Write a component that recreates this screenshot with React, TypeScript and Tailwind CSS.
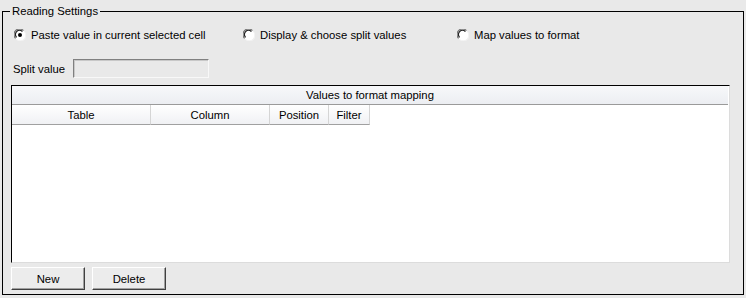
import React from "react";

function Radio({ checked, label }: { checked?: boolean; label: string }) {
  return (
    <label className="flex items-center gap-[5px]">
      <svg width="12" height="12" viewBox="0 0 12 12" className="shrink-0">
        <circle cx="6" cy="6" r="5.5" fill="#ffffff" />
        <path d="M1.6 9.4 A5.3 5.3 0 0 1 9.4 1.6" fill="none" stroke="#707070" strokeWidth="1.2" />
        <path d="M2.6 8.4 A4.1 4.1 0 0 1 8.4 2.6" fill="none" stroke="#202020" strokeWidth="1.2" />
        <path d="M10.4 2.6 A5.3 5.3 0 0 1 2.6 10.4" fill="none" stroke="#f4f4f4" strokeWidth="1" />
        {checked && <circle cx="6" cy="6" r="2" fill="#000000" />}
      </svg>
      <span>{label}</span>
    </label>
  );
}

function Button({ children }: { children: React.ReactNode }) {
  return (
    <button className="h-[23px] w-[74px] bg-[#ececec] border border-t-white border-l-white border-r-[#404040] border-b-[#404040] shadow-[inset_-1px_-1px_0_#a0a0a0] text-black">
      {children}
    </button>
  );
}

const columns = [
  { name: "Table", w: "w-[139px]" },
  { name: "Column", w: "w-[119px]" },
  { name: "Position", w: "w-[59px]" },
  { name: "Filter", w: "w-[41px]" },
];

export default function App() {
  return (
    <div className="w-[746px] h-[298px] bg-[#e9e9e9] pt-[4px] px-[2px] font-['Liberation_Sans',Arial,sans-serif] text-[11.3px] leading-[14px] text-black overflow-hidden">
      <fieldset className="h-[291px] border border-black pl-[7px] pr-[13px]">
        <legend className="px-[2px]">Reading Settings</legend>

        {/* reading mode */}
        <div className="mt-[10px] flex pl-[4px]">
          <div className="w-[229px]">
            <Radio checked label="Paste value in current selected cell" />
          </div>
          <div className="w-[214px]">
            <Radio label="Display & choose split values" />
          </div>
          <Radio label="Map values to format" />
        </div>

        {/* split value */}
        <div className="mt-[17px] flex items-center pl-[3px]">
          <span className="w-[60px]">Split value</span>
          <div className="h-[19px] w-[136px] bg-[#e9e9e9] border border-t-[#808080] border-l-[#808080] border-r-[#f8f8f8] border-b-[#f8f8f8] shadow-[inset_1px_1px_0_#c8c8c8]" />
        </div>

        {/* grid */}
        <div className="mt-[7px] ml-[1px] h-[178px] bg-white border border-t-black border-l-black border-r-[#dcdcdc] border-b-[#dcdcdc]">
          <div className="h-[19px] flex items-center justify-center bg-gradient-to-b from-[#f7f8fa] to-[#eceef2] border-b border-[#9a9a9a] mr-[1px]">
            Values to format mapping
          </div>
          <div className="flex h-[20px]">
            {columns.map((c) => (
              <div
                key={c.name}
                className={`${c.w} flex items-center justify-center bg-gradient-to-b from-[#ffffff] to-[#f0f1f4] border-r border-b border-r-[#d5d5d5] border-b-[#a0a0a0]`}
              >
                {c.name}
              </div>
            ))}
          </div>
        </div>

        {/* actions */}
        <div className="mt-[4px] ml-[1px] flex gap-[7px]">
          <Button>New</Button>
          <Button>Delete</Button>
        </div>
      </fieldset>
    </div>
  );
}
